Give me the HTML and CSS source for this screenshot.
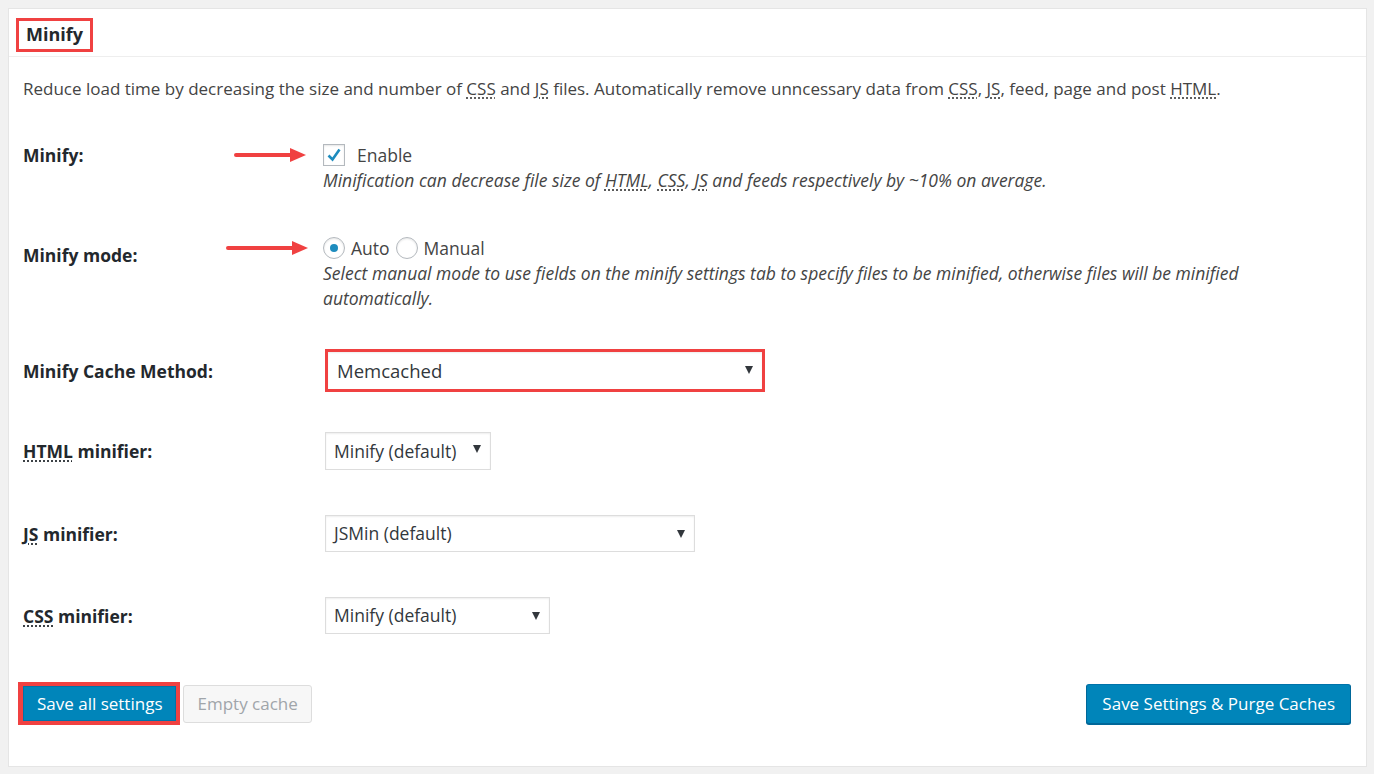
FILE: index.html
```html
<!DOCTYPE html>
<html lang="en">
<head>
    <meta charset="UTF-8">
    <title>Minify</title>
    <link rel="stylesheet" href="styles.css">
</head>
<body>
    <div class="postbox">
        <h3 class="hndle"><span class="mark">Minify</span></h3>

        <div class="inside">
            <p class="intro">Reduce load time by decreasing the size and number of <abbr>CSS</abbr> and <abbr>JS</abbr> files. Automatically remove unncessary data from <abbr>CSS</abbr>, <abbr>JS</abbr>, feed, page and post <abbr>HTML</abbr>.</p>

            <div class="form-row row-enable">
                <div class="label">Minify:</div>
                <div class="field">
                    <svg class="arrow" width="74" height="16" viewBox="0 0 74 16">
                        <line x1="2" y1="8" x2="60" y2="8" stroke="#f04141" stroke-width="4" stroke-linecap="round"/>
                        <polygon points="56,1 72,8 56,15" fill="#f04141"/>
                    </svg>
                    <label class="choice"><span class="checkbox"><svg width="18" height="18" viewBox="0 0 18 18"><path d="M3.5 9.5 L7.5 13.5 L14.5 3.5" fill="none" stroke="#1e8cbe" stroke-width="2.6"/></svg></span>Enable</label>
                    <p class="note">Minification can decrease file size of <abbr>HTML</abbr>, <abbr>CSS</abbr>, <abbr>JS</abbr> and feeds respectively by ~10% on average.</p>
                </div>
            </div>

            <div class="form-row row-mode">
                <div class="label">Minify mode:</div>
                <div class="field">
                    <svg class="arrow" width="84" height="16" viewBox="0 0 84 16">
                        <line x1="2" y1="8" x2="70" y2="8" stroke="#f04141" stroke-width="4" stroke-linecap="round"/>
                        <polygon points="66,1 82,8 66,15" fill="#f04141"/>
                    </svg>
                    <div class="choices">
                        <label class="choice"><span class="radio checked"></span>Auto</label>
                        <label class="choice"><span class="radio"></span>Manual</label>
                    </div>
                    <p class="note">Select manual mode to use fields on the minify settings tab to specify files to be minified, otherwise files will be minified automatically.</p>
                </div>
            </div>

            <div class="form-row row-select row-cache">
                <div class="label">Minify Cache Method:</div>
                <div class="field">
                    <div class="select-mark">
                        <div class="select select-wide">Memcached<span class="caret"></span></div>
                    </div>
                </div>
            </div>

            <div class="form-row row-select row-html">
                <div class="label"><abbr>HTML</abbr> minifier:</div>
                <div class="field">
                    <div class="select select-html">Minify (default)<span class="caret"></span></div>
                </div>
            </div>

            <div class="form-row row-select row-js">
                <div class="label"><abbr>JS</abbr> minifier:</div>
                <div class="field">
                    <div class="select select-js">JSMin (default)<span class="caret"></span></div>
                </div>
            </div>

            <div class="form-row row-select row-css">
                <div class="label"><abbr>CSS</abbr> minifier:</div>
                <div class="field">
                    <div class="select select-css">Minify (default)<span class="caret"></span></div>
                </div>
            </div>

            <div class="actions">
                <div class="left-buttons">
                    <span class="button-mark"><button class="button primary">Save all settings</button></span>
                    <button class="button disabled">Empty cache</button>
                </div>
                <button class="button primary rounded">Save Settings &amp; Purge Caches</button>
            </div>
        </div>
    </div>
</body>
</html>
```

FILE: styles.css
```css
body {
    margin: 0;
    padding: 8px 7px 7px 8px;
    background-color: #f1f1f1;
    font-family: 'Open Sans', 'Noto Sans', sans-serif;
    font-size: 17px;
    color: #444;
}

.postbox {
    background-color: #fff;
    border: 1px solid #e5e5e5;
    height: 759px;
    box-sizing: border-box;
}

.hndle {
    margin: 0;
    height: 48px;
    border-bottom: 1px solid #eee;
    padding: 9px 0 0 7px;
    box-sizing: border-box;
    font-size: 18px;
    font-weight: 700;
    color: #23282d;
}

.mark {
    display: inline-block;
    border: 3px solid #f04141;
    padding: 2px 7px 3px 7px;
    line-height: 23px;
}

.inside {
    padding: 0 14px;
}

abbr {
    text-decoration: underline dotted;
    text-underline-offset: 3px;
}

.intro {
    margin: 20px 0 0 0;
    line-height: 24px;
}

.form-row {
    display: flex;
    align-items: flex-start;
}

.label {
    width: 300px;
    flex-shrink: 0;
    font-size: 17.5px;
    font-weight: 700;
    color: #23282d;
    line-height: 24px;
}

.field {
    position: relative;
    flex: 1;
}

.arrow {
    position: absolute;
    top: 4px;
}

.row-enable {
    margin-top: 42px;
}

.row-enable .arrow {
    left: -89px;
}

.row-mode {
    margin-top: 43px;
}

.row-mode .label {
    padding-top: 7px;
}

.row-mode .arrow {
    left: -97px;
}

.choices {
    display: flex;
    gap: 6px;
}

.choice {
    display: flex;
    align-items: center;
    line-height: 24px;
    font-size: 17.5px;
}

.checkbox {
    width: 20px;
    height: 20px;
    border: 1px solid #b4b9be;
    box-shadow: inset 0 1px 2px rgba(0, 0, 0, 0.1);
    margin-right: 12px;
    display: flex;
    align-items: center;
    justify-content: center;
}

.radio {
    width: 20px;
    height: 20px;
    border: 1px solid #b4b9be;
    border-radius: 50%;
    box-shadow: inset 0 1px 2px rgba(0, 0, 0, 0.1);
    margin-right: 6px;
    position: relative;
}

.radio.checked:after {
    content: '';
    position: absolute;
    left: 6px;
    top: 6px;
    width: 8px;
    height: 8px;
    border-radius: 50%;
    background-color: #1e8cbe;
}

.note {
    margin: 1px 0 0 0;
    font-size: 17.5px;
    font-style: italic;
    line-height: 25px;
    padding-right: 90px;
}

.row-select {
    align-items: center;
}

.row-cache {
    margin-top: 38px;
}

.row-html {
    margin-top: 40px;
}

.row-js {
    margin-top: 45px;
}

.row-css {
    margin-top: 45px;
}

.select-mark {
    display: inline-block;
    border: 3px solid #f04141;
    margin-left: 2px;
}

.select {
    position: relative;
    height: 37px;
    box-sizing: border-box;
    border: 1px solid #ddd;
    box-shadow: inset 0 1px 2px rgba(0, 0, 0, 0.07);
    background-color: #fff;
    font-size: 17.5px;
    color: #32373c;
    line-height: 35px;
    padding-left: 8px;
    margin-left: 2px;
}

.select-mark .select {
    border: none;
    width: 434px;
    height: 37px;
    line-height: 37px;
    padding-left: 9px;
    margin-left: 0;
    font-size: 18.5px;
}

.select-html {
    width: 166px;
    height: 38px;
    line-height: 36px;
}

.select-js {
    width: 370px;
}

.select-css {
    width: 225px;
}

.caret {
    position: absolute;
    right: 9px;
    top: 14px;
    width: 0;
    height: 0;
    border-left: 4px solid transparent;
    border-right: 4px solid transparent;
    border-top: 8px solid #32373c;
}

.select-html .caret {
    top: 12px;
}

.actions {
    display: flex;
    justify-content: space-between;
    align-items: center;
    margin: 48px 1px 0 -5px;
}

.left-buttons {
    display: flex;
    align-items: center;
    gap: 3px;
}

.button-mark {
    display: block;
    border: 4px solid #f04141;
    border-left-width: 5px;
}

.button {
    font-family: 'Open Sans', 'Noto Sans', sans-serif;
    font-size: 17px;
    height: 35px;
    padding: 0 13px;
    border-radius: 0;
    cursor: pointer;
    display: block;
}

.primary {
    background-color: #0085ba;
    border: 1px solid #0073aa;
    color: #fff;
}

.disabled {
    height: 38px;
    background-color: #f7f7f7;
    border: 1px solid #ddd;
    border-radius: 3px;
    color: #a0a5aa;
}

.rounded {
    height: 40px;
    border-radius: 3px;
    border-color: #0073aa #006799 #006799;
    box-shadow: 0 1px 0 #006799;
    padding: 0 15px;
}
```
